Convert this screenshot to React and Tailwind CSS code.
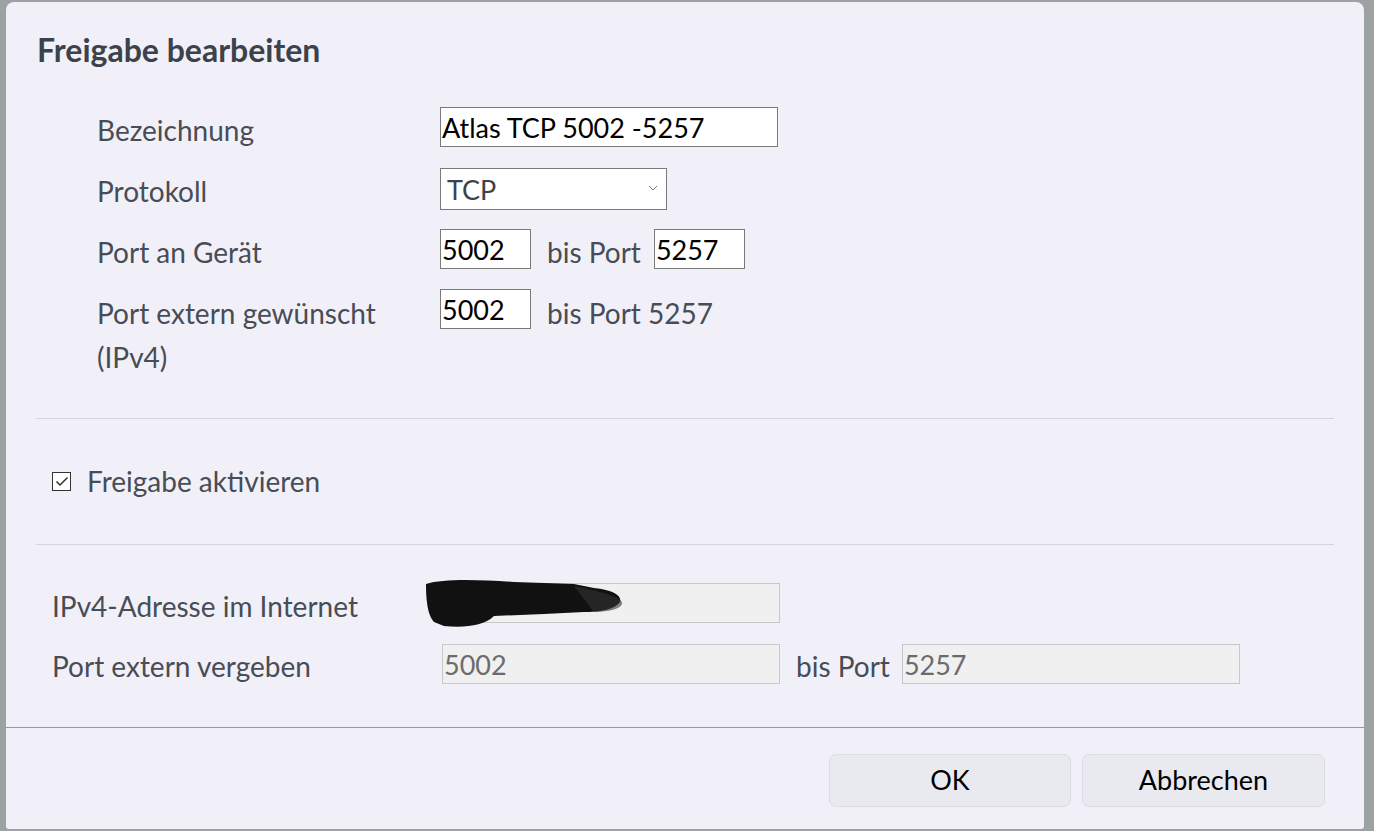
import React from "react";

const F = { fontFamily: '"Lato", "Noto Sans", sans-serif' };

function Row({ label, children, labelW = "w-[343px]" }) {
  return (
    <div className="flex items-start">
      <div className={`${labelW} shrink-0 text-[28px] leading-[44px] text-[#474d56]`}>{label}</div>
      {children}
    </div>
  );
}

function Input({ value, w, h = "h-[40px]", mt = "mt-[-1px]" }) {
  return (
    <div className={`${w} ${h} ${mt} shrink-0 bg-white border border-[#7a7a7a] pl-[1px] flex items-center text-[27px] text-black leading-none`}>
      {value}
    </div>
  );
}

function RoInput({ value, w, mt = "mt-[-1px]" }) {
  return (
    <div className={`${w} h-[40px] ${mt} shrink-0 bg-[#f0f0f0] border border-[#c8c8cc] pl-[1px] flex items-center text-[27px] text-[#6b6b6b] leading-none`}>
      {value}
    </div>
  );
}

export default function App() {
  return (
    <div className="w-[1374px] h-[831px] bg-[#9ca2a2] pt-[2px] pl-[6px] overflow-hidden" style={F}>
      <div className="w-[1358px] h-[827px] bg-[#f1f0f8] rounded-t-[8px] rounded-b-[3px] flex flex-col">
        <div className="mt-[28px] pl-[31px] h-[40px] leading-[40px] text-[32px] font-bold text-[#3c424a]">
          Freigabe bearbeiten
        </div>

        <div className="mt-[38px] pl-[91px] flex flex-col gap-[17px]">
          <Row label="Bezeichnung">
            <Input value="Atlas TCP 5002 -5257" w="w-[338px]" />
          </Row>
          <Row label="Protokoll">
            <div className="w-[227px] h-[42px] mt-[-1px] shrink-0 bg-white border border-[#7a7a7a] pl-[6px] pr-[8px] flex items-center justify-between text-[27px] text-[#3c424a] leading-none">
              <span>TCP</span>
              <svg width="10" height="6" viewBox="0 0 10 6" className="mt-[-2px]">
                <path d="M1 1 L5 5 L9 1" fill="none" stroke="#777" strokeWidth="1" />
              </svg>
            </div>
          </Row>
          <Row label="Port an Gerät">
            <div className="flex items-start">
              <Input value="5002" w="w-[91px]" />
              <span className="ml-[16px] text-[28px] leading-[44px] text-[#474d56]">bis Port</span>
              <div className="ml-[13px]">
                <Input value="5257" w="w-[91px]" />
              </div>
            </div>
          </Row>
          <Row
            label={
              <>
                Port extern gewünscht
                <br />
                (IPv4)
              </>
            }
          >
            <div className="flex items-start">
              <Input value="5002" w="w-[91px]" mt="mt-[-2px]" />
              <span className="ml-[16px] text-[28px] leading-[44px] text-[#474d56]">bis Port 5257</span>
            </div>
          </Row>
        </div>

        <div className="mt-[39px] mx-[30px] border-t border-[#d4d4dc]" />

        <div className="mt-[40px] pl-[46px] h-[44px] flex items-center">
          <div className="w-[19px] h-[19px] border border-[#333] bg-white flex items-center justify-center">
            <svg width="14" height="11" viewBox="0 0 14 11">
              <path d="M1.5 5.5 L5 9 L12.5 1.5" fill="none" stroke="#333" strokeWidth="1.5" />
            </svg>
          </div>
          <span className="ml-[16px] text-[28px] leading-[44px] text-[#474d56]">Freigabe aktivieren</span>
        </div>

        <div className="mt-[41px] mx-[30px] border-t border-[#d4d4dc]" />

        <div className="mt-[39px] pl-[46px] flex flex-col gap-[16px]">
          <Row label="IPv4-Adresse im Internet" labelW="w-[390px]">
            <div className="relative">
              <RoInput value="" w="w-[338px]" />
              <svg className="absolute left-[-18px] top-[-8px]" width="200" height="56" viewBox="0 0 200 56">
                <path
                  d="M2 8 C 20 2, 60 4, 90 6 L 150 8 L 170 12 C 190 14, 198 20, 196 26 C 190 34, 175 36, 160 36 L 120 38 L 70 40 C 60 50, 40 52, 20 50 L 10 46 C 5 40, 2 30, 2 8 Z"
                  fill="#111"
                />
                <path d="M150 10 C 180 16, 200 22, 198 28 C 196 34, 180 36, 170 36 Z" fill="#333" opacity="0.6" />
              </svg>
            </div>
          </Row>
          <Row label="Port extern vergeben" labelW="w-[390px]">
            <div className="flex items-start">
              <RoInput value="5002" w="w-[338px]" mt="mt-[0px]" />
              <span className="ml-[16px] text-[28px] leading-[44px] text-[#474d56]">bis Port</span>
              <div className="ml-[12px]">
                <RoInput value="5257" w="w-[338px]" mt="mt-[0px]" />
              </div>
            </div>
          </Row>
        </div>

        <div className="mt-[39px] border-t border-[#8d9ba2] flex-1 flex justify-end items-start pr-[39px] pt-[26px] gap-[11px]">
          <button className="w-[242px] h-[53px] rounded-[7px] bg-[#e9eaf0] border border-[#dcdde4] text-[27px] text-black" style={F}>
            OK
          </button>
          <button className="w-[243px] h-[53px] rounded-[7px] bg-[#e9eaf0] border border-[#dcdde4] text-[27px] text-black" style={F}>
            Abbrechen
          </button>
        </div>
      </div>
    </div>
  );
}
